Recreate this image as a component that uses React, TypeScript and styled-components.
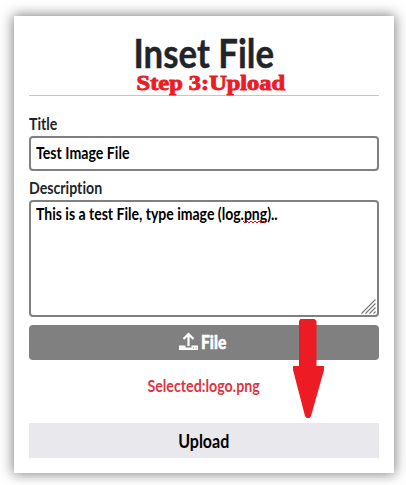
import React from "react";
import styled, { createGlobalStyle } from "styled-components";

const GlobalStyle = createGlobalStyle`
  * { box-sizing: border-box; }
  body { margin: 0; background: #fff; overflow: hidden; font-family: Lato, "Open Sans", sans-serif; font-variant-ligatures: none; }
`;

const Page = styled.main`
  height: 485px;
  padding: 16px 12px 12px 14px;
`;

const Card = styled.form`
  position: relative;
  display: flex;
  flex-direction: column;
  width: 380px;
  height: 457px;
  padding: 0 15px;
  background: #fff;
  box-shadow: 0 0 12px 1px rgba(0, 0, 0, 0.5);
`;

const Type = styled.span<{ $scale: number; $center?: boolean }>`
  display: inline-block;
  white-space: pre;
  transform: scaleX(${(p) => p.$scale});
  transform-origin: ${(p) => (p.$center ? "center" : "left")};
`;

const Header = styled.header`
  display: flex;
  flex-direction: column;
  align-items: center;
  height: 80px;
  border-bottom: 1px solid #c5c5c7;
`;

const Heading = styled.h1`
  margin: 18px 0 0;
  height: 39px;
  font-size: 40px;
  line-height: 39px;
  font-weight: 700;
  color: #212529;
  -webkit-text-stroke: 0.4px #212529;
`;

const Step = styled.div`
  margin-left: 14px;
  font: 700 20px/20px "Liberation Serif", serif;
  color: #ed1c24;
  -webkit-text-stroke: 0.9px #ed1c24;
`;

const Label = styled.label`
  height: 22px;
  font-size: 16.3px;
  line-height: 20px;
  font-weight: 700;
  color: #212529;
`;

const TitleLabel = styled(Label)`
  margin-top: 18px;
`;

const DescriptionLabel = styled(Label)`
  margin-top: 7px;
`;

const Field = styled.div<{ $height: number }>`
  position: relative;
  flex: none;
  height: ${(p) => p.$height}px;
  padding: 5px;
  border: 2px solid #808080;
  border-radius: 4px;
  font-size: 16.3px;
  line-height: 20px;
  font-weight: 700;
  color: #000;
`;

const TitleField = styled(Field)`
  padding-top: 5px;
`;

const DescriptionField = styled(Field)`
  padding-top: 2px;
`;

const Grip = styled.svg`
  position: absolute;
  right: 1px;
  bottom: 1px;
`;

const Squiggle = styled.svg`
  position: absolute;
  left: 212px;
  top: 18px;
`;

const FileButton = styled.button`
  display: flex;
  flex: none;
  align-items: center;
  gap: 4px;
  height: 35px;
  margin-top: 8px;
  padding: 0 0 0 150px;
  border: 0;
  border-radius: 4px;
  background: #808080;
  color: #fff;
  font: 900 18px/34px Lato, sans-serif;
`;

const FileCaption = styled.span`
  height: 35px;
  margin-left: -1px;
  -webkit-text-stroke: 0.5px #fff;
`;

const UploadIcon = styled.svg`
  margin-top: -2px;
`;

const Selected = styled.p`
  margin: 16px 0 0;
  height: 47px;
  text-align: center;
  font-size: 16.4px;
  line-height: 20px;
  font-weight: 700;
  color: #dc3545;
`;

const UploadButton = styled.button`
  flex: none;
  height: 35px;
  padding: 0;
  border: 0;
  background: #e8e8ed;
  color: #000;
  font: 700 18px/34px Lato, sans-serif;
`;

const Arrow = styled.svg`
  position: absolute;
  left: 279px;
  top: 303px;
`;

export default function App() {
  return (
    <>
      <GlobalStyle />
      <Page>
        <Card>
          <Header>
            <Heading><Type $scale={0.87} $center>Inset File</Type></Heading>
            <Step><Type $scale={1.22} $center>Step 3:Upload</Type></Step>
          </Header>
          <TitleLabel><Type $scale={0.87}>Title</Type></TitleLabel>
          <TitleField $height={35}><Type $scale={0.87}>Test Image File</Type></TitleField>
          <DescriptionLabel><Type $scale={0.87}>Description</Type></DescriptionLabel>
          <DescriptionField $height={117}>
            <Type $scale={0.862}>This is a test File, type image (log.png)..</Type>
            <Squiggle width="26" height="5" viewBox="0 0 26 5">
              <path d="M0 1l2 2 2-2 2 2 2-2 2 2 2-2 2 2 2-2 2 2 2-2 2 2 2-2" fill="none" stroke="#f00" />
            </Squiggle>
            <Grip width="15" height="15" viewBox="0 0 15 15">
              <path d="M0.5 14.5l14-14M4.5 14.5l10-10M8.5 14.5l6-6M12.5 14.5l2-2" stroke="#777" strokeWidth="1.1" />
            </Grip>
          </DescriptionField>
          <FileButton type="button">
            <UploadIcon width="19" height="19" viewBox="0 0 19 19">
              <path d="M0 13.5h6.5v2h6v-2H19V18H0z" fill="#fff" />
              <path d="M9.5 14V2M4.5 7l5-5 5 5" fill="none" stroke="#fff" strokeWidth="2.2" />
              <path d="M14 16h1M16.5 16h1" stroke="#808080" />
            </UploadIcon>
            <FileCaption><Type $scale={0.87}>File</Type></FileCaption>
          </FileButton>
          <Selected><Type $scale={0.87} $center>Selected:logo.png</Type></Selected>
          <UploadButton type="submit"><Type $scale={0.89} $center>Upload</Type></UploadButton>
          <Arrow width="31" height="100" viewBox="0 0 31 100">
            <path d="M7.5 0h14l2 2v45H31v4l-13 46-1.5 2h-3L12 97 0 51v-4h6V2z" fill="#ed1c24" />
          </Arrow>
        </Card>
      </Page>
    </>
  );
}
